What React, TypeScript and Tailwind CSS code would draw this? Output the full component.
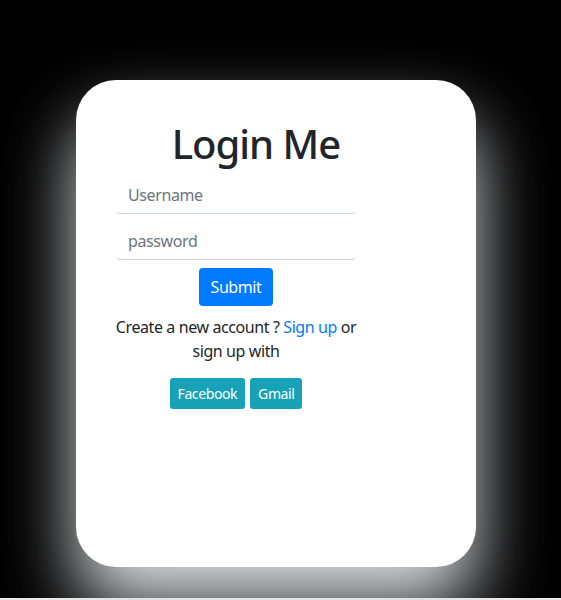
export default function App() {
  return (
    <div className="min-h-[600px] bg-[#e9ecef]" style={{ fontFamily: '"Noto Sans", "Open Sans", sans-serif' }}>
      <div className="h-[598px] bg-black pt-[80px] pl-[76px]">
        <div className="w-[400px] h-[487px] bg-white rounded-[40px] shadow-[0_40px_70px_0_#d8dadf] pt-[40px]">
          <h1 className="ml-[40px] w-[280px] text-center text-[40px] leading-[1.2] font-medium tracking-[-1px] text-[#212529] mb-[8px]">
            Login Me
          </h1>
          <form className="ml-[40px] w-[240px] flex flex-col items-center text-[#212529] tracking-[-0.4px]">
            <input
              type="text"
              placeholder="Username"
              className="w-full h-[38px] px-3 text-base border-b border-[#ced4da] rounded-[4px] placeholder:text-[#6c757d] outline-none mb-2"
            />
            <input
              type="password"
              placeholder="password"
              className="w-full h-[38px] px-3 text-base border-b border-[#ced4da] rounded-[4px] placeholder:text-[#6c757d] outline-none"
            />
            <button
              type="button"
              className="mt-[8px] h-[38px] px-3 bg-[#007bff] text-white text-base rounded-[4px]"
            >
              Submit
            </button>
            <p className="mt-[9px] text-center text-base leading-6 whitespace-nowrap">
              Create a new account ? <a className="text-[#007bff]">Sign up</a> or
              <br />
              sign up with
            </p>
            <div className="mt-[15px] flex gap-[5px]">
              <button type="button" className="h-[31px] px-2 bg-[#17a2b8] text-white text-sm rounded-[3px]">
                Facebook
              </button>
              <button type="button" className="h-[31px] px-2 bg-[#17a2b8] text-white text-sm rounded-[3px]">
                Gmail
              </button>
            </div>
          </form>
        </div>
      </div>
    </div>
  );
}
